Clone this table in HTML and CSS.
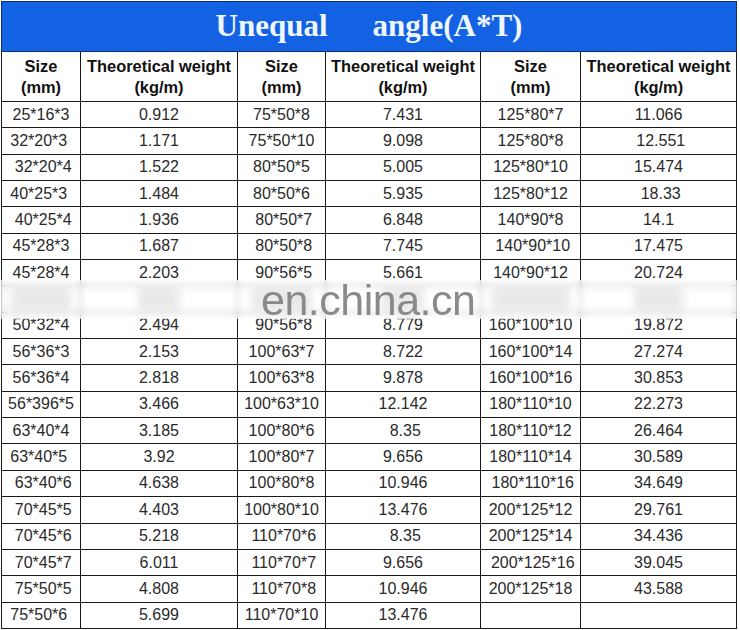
FILE: index.html
```html
<!DOCTYPE html>
<html>
<head>
<meta charset="utf-8">
<title>Unequal angle</title>
<link rel="stylesheet" href="styles.css">
</head>
<body>
<div class="sheet">
  <table class="grid">
    <colgroup>
      <col class="c1"><col class="c2"><col class="c3"><col class="c4"><col class="c5"><col class="c6">
    </colgroup>
    <thead>
      <tr class="title-row">
        <th colspan="6"><div class="title"><span>Unequal</span><span>angle(A*T)</span></div></th>
      </tr>
      <tr class="head-row">
        <th>Size<br>(mm)</th><th>Theoretical weight<br>(kg/m)</th>
        <th>Size<br>(mm)</th><th>Theoretical weight<br>(kg/m)</th>
        <th>Size<br>(mm)</th><th>Theoretical weight<br>(kg/m)</th>
      </tr>
    </thead>
    <tbody>
      <tr><td>25*16*3</td><td>0.912</td><td>75*50*8</td><td>7.431</td><td>125*80*7</td><td>11.066</td></tr>
      <tr><td>32*20*3 </td><td>1.171</td><td>75*50*10</td><td>9.098</td><td>125*80*8</td><td> 12.551</td></tr>
      <tr><td> 32*20*4</td><td>1.522</td><td>80*50*5</td><td>5.005</td><td>125*80*10</td><td>15.474</td></tr>
      <tr><td>40*25*3 </td><td>1.484</td><td>80*50*6</td><td>5.935</td><td>125*80*12</td><td> 18.33</td></tr>
      <tr><td> 40*25*4</td><td>1.936</td><td> 80*50*7</td><td>6.848</td><td>140*90*8</td><td>14.1</td></tr>
      <tr><td>45*28*3</td><td>1.687</td><td> 80*50*8</td><td>7.745</td><td> 140*90*10</td><td>17.475</td></tr>
      <tr><td>45*28*4</td><td>2.203</td><td> 90*56*5</td><td>5.661</td><td>140*90*12</td><td>20.724</td></tr>
      <tr class="hidden-row">
        <td><i class="smear w58"></i></td><td><i class="smear w40"></i></td>
        <td><i class="smear w58"></i></td><td><i class="smear w40"></i></td>
        <td><i class="smear w76"></i></td><td><i class="smear w48"></i></td>
      </tr>
      <tr><td>50*32*4</td><td>2.494</td><td> 90*56*8</td><td>8.779</td><td>160*100*10</td><td>19.872</td></tr>
      <tr><td>56*36*3</td><td>2.153</td><td>100*63*7</td><td>8.722</td><td>160*100*14</td><td>27.274</td></tr>
      <tr><td>56*36*4</td><td>2.818</td><td>100*63*8</td><td>9.878</td><td>160*100*16</td><td>30.853</td></tr>
      <tr><td>56*396*5</td><td>3.466</td><td>100*63*10</td><td>12.142</td><td>180*110*10</td><td>22.273</td></tr>
      <tr><td>63*40*4</td><td>3.185</td><td>100*80*6</td><td> 8.35</td><td>180*110*12</td><td>26.464</td></tr>
      <tr><td>63*40*5 </td><td>3.92</td><td>100*80*7</td><td>9.656</td><td>180*110*14</td><td>30.589</td></tr>
      <tr><td> 63*40*6</td><td>4.638</td><td>100*80*8</td><td>10.946</td><td> 180*110*16</td><td>34.649</td></tr>
      <tr><td> 70*45*5</td><td>4.403</td><td>100*80*10</td><td>13.476</td><td>200*125*12</td><td>29.761</td></tr>
      <tr><td> 70*45*6</td><td>5.218</td><td> 110*70*6</td><td> 8.35</td><td>200*125*14</td><td>34.436</td></tr>
      <tr><td> 70*45*7</td><td>6.011</td><td> 110*70*7</td><td>9.656</td><td> 200*125*16</td><td>39.045</td></tr>
      <tr><td> 75*50*5</td><td>4.808</td><td> 110*70*8</td><td>10.946</td><td>200*125*18</td><td>43.588</td></tr>
      <tr><td>75*50*6 </td><td>5.699</td><td>110*70*10</td><td>13.476</td><td></td><td></td></tr>
    </tbody>
  </table>
  <div class="watermark"><span class="wm-text">en.china.cn</span></div>
</div>
</body>
</html>
```

FILE: styles.css
```css
html, body {
  margin: 0;
  padding: 0;
  background: #ffffff;
}

.sheet {
  position: relative;
  width: 735px;
  margin: 1px 0 0 1px;
}

.grid {
  width: 735px;
  table-layout: fixed;
  border-collapse: collapse;
  font-family: "Liberation Sans", Arial, sans-serif;
  color: #2a2a2a;
}

.c1 { width: 79px; }
.c2 { width: 157px; }
.c3 { width: 88px; }
.c4 { width: 155px; }
.c5 { width: 100px; }
.c6 { width: 156px; }

.grid th,
.grid td {
  border: 1px solid #1a1a1a;
  padding: 0;
  text-align: center;
  white-space: pre;
  overflow: hidden;
}

.title-row th {
  height: 49px;
  background: #1462e4;
  border-color: #0c2f70;
}

.title {
  display: flex;
  justify-content: center;
  gap: 45px;
  font-family: "Liberation Serif", "Times New Roman", serif;
  font-weight: bold;
  font-size: 31px;
  color: #eef6ff;
  line-height: 1;
  padding-bottom: 2px;
}

.head-row th {
  height: 49px;
  font-size: 16.4px;
  font-weight: bold;
  line-height: 21px;
  color: #111111;
}

.grid td {
  height: 25.35px;
  font-size: 16px;
  line-height: 18px;
}

.smear {
  display: inline-block;
  height: 22px;
  vertical-align: middle;
  background: repeating-linear-gradient(90deg, #9a9a9a 0 5px, #e2e2e2 5px 9px);
  filter: blur(2.5px);
  opacity: 0.8;
}

.w40 { width: 40px; }
.w48 { width: 48px; }
.w58 { width: 58px; }
.w76 { width: 76px; }

.watermark {
  position: absolute;
  left: 0;
  top: 279px;
  width: 736px;
  height: 39px;
  background: rgba(255, 255, 255, 0.6);
  backdrop-filter: blur(3px);
  -webkit-backdrop-filter: blur(3px);
}

.wm-text {
  position: absolute;
  left: 260px;
  top: 4px;
  font-family: "Liberation Sans", Arial, sans-serif;
  font-size: 43px;
  line-height: 32px;
  color: #8a8a8a;
  letter-spacing: -0.5px;
}
```
